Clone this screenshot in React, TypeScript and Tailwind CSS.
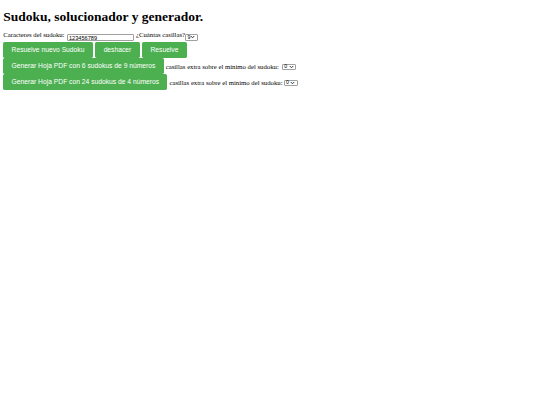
import React from "react";

function FakeSelect({ value, w, h, mt }: { value: string; w: string; h: string; mt: string }) {
  return (
    <div
      className={`flex items-center justify-between border border-[#a0a0a0] rounded-[1px] bg-white px-[1.5px] font-['Liberation_Sans',sans-serif] text-[5.2px] leading-none text-black ${w} ${h} ${mt}`}
    >
      <span>{value}</span>
      <svg width="5" height="4" viewBox="0 0 10 8" className="shrink-0">
        <polyline points="1.5,2 5,5.5 8.5,2" fill="none" stroke="#222" strokeWidth="1.8" />
      </svg>
    </div>
  );
}

const btn =
  "shrink-0 bg-[#4CAF50] text-white rounded-[1.7px] px-[8.3px] py-[4.15px] h-[16px] text-[6.72px] leading-[7.7px] font-['Liberation_Sans',sans-serif] whitespace-nowrap";

export default function App() {
  return (
    <div className="min-h-[405px] bg-white pt-[8.9px] pl-[3.3px] text-black font-['Liberation_Serif',serif] text-[6.72px] leading-[7.6px]">
      <h1 className="m-0 mb-[7.3px] text-[13.5px] leading-[15.3px] font-bold">
        Sudoku, solucionador y generador.
      </h1>

      <div className="flex items-start h-[10.5px] whitespace-nowrap">
        <span>Caracteres del sudoku:</span>
        <input
          readOnly
          value="123456789"
          className="ml-[2px] mt-[2.5px] w-[67px] h-[7.3px] border border-[#a0a0a0] rounded-[1px] px-[1.5px] font-['Liberation_Sans',sans-serif] text-[5.6px] leading-none text-black outline-none"
        />
        <span className="ml-[2.5px]">¿Cuántas casillas?</span>
        <FakeSelect value="9" w="w-[12.6px]" h="h-[7px]" mt="mt-[2.5px]" />
      </div>

      <div className="flex gap-[2.6px]">
        <button className={btn}>Resuelve nuevo Sudoku</button>
        <button className={btn}>deshacer</button>
        <button className={btn}>Resuelve</button>
      </div>

      <div className="flex items-center whitespace-nowrap">
        <button className={btn}>Generar Hoja PDF con 6 sudokus de 9 números</button>
        <span className="ml-[2px] mt-[1.5px]">casillas extra sobre el mínimo del sudoku:</span>
        <FakeSelect value="0" w="w-[14.6px]" h="h-[5.8px]" mt="mt-[2px] ml-[3px]" />
      </div>

      <div className="flex items-center whitespace-nowrap">
        <button className={btn}>Generar Hoja PDF con 24 sudokus de 4 números</button>
        <span className="ml-[2px] mt-[1.5px]">casillas extra sobre el mínimo del sudoku:</span>
        <FakeSelect value="0" w="w-[14px]" h="h-[5.6px]" mt="mt-[2px] ml-[1px]" />
      </div>
    </div>
  );
}
